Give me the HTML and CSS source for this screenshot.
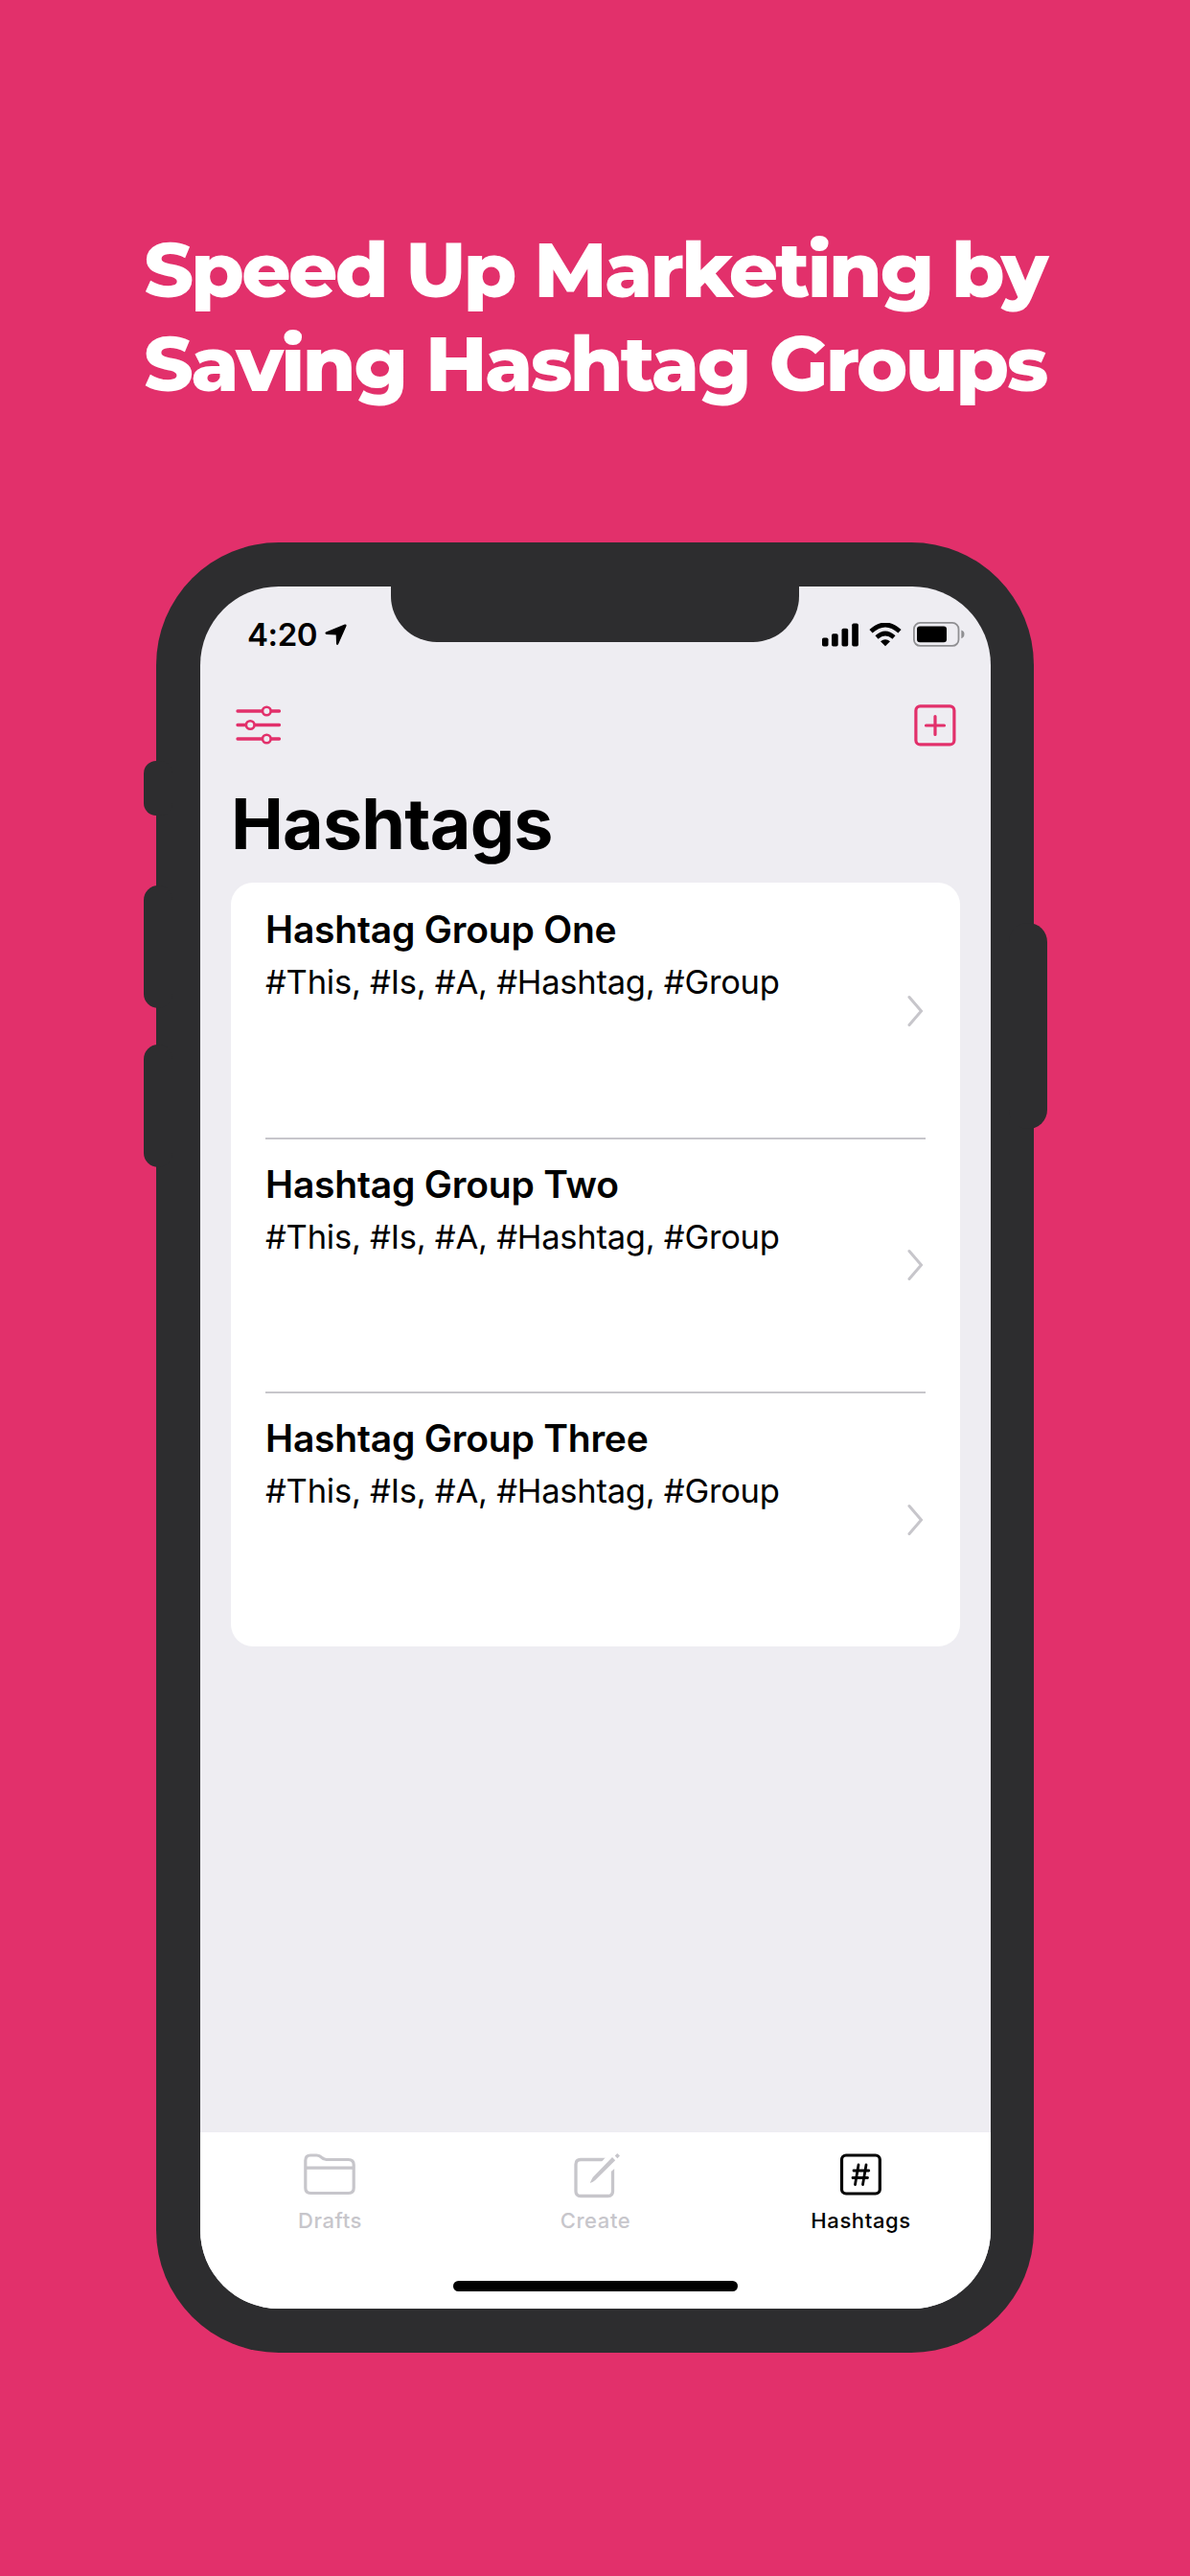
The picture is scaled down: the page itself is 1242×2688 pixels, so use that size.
FILE: index.html
```html
<!DOCTYPE html>
<html lang="en">
<head>
<meta charset="utf-8">
<title>Hashtags</title>
<link rel="stylesheet" href="styles.css">
</head>
<body>
<main class="poster">
  <h1 class="headline"><span class="line-one">Speed Up Marketing by</span><span class="line-two">Saving Hashtag Groups</span></h1>
  <div class="phone">
    <i class="key key-mute"></i><i class="key key-up"></i><i class="key key-down"></i><i class="key key-power"></i>
    <div class="screen">
      <div class="notch"></div>
      <div class="status">
        <span class="time">4:20</span>
        <svg class="location" width="23" height="23" viewBox="0 0 23 23"><path d="M20.800 .5Q22.900 .1 22.500 2.200L14.200 21Q13 23 12 21L11.700 11.500L1.500 10.900Q-.5 9.700 1.200 8.500Z"/></svg>
        <div class="indicators">
          <svg width="38" height="25" viewBox="0 0 38 25"><rect x="0" y="15.500" width="6.500" height="9" rx="1.800"/><rect x="10" y="11.200" width="6.700" height="13.300" rx="1.800"/><rect x="20.500" y="5.800" width="6.700" height="18.700" rx="1.800"/><rect x="31.200" y=".5" width="6.700" height="24" rx="1.800"/></svg>
          <svg width="34" height="25" viewBox="0 0 34 25"><path d="M2 8.800Q17-4.800 32 8.800" fill="none" stroke="#000" stroke-width="4.800"/><path d="M8 15Q17 7 26 15" fill="none" stroke="#000" stroke-width="4.600"/><path d="M12 19.200Q17 15.200 22 19.200L17 24.300Z"/></svg>
          <svg width="54" height="26" viewBox="0 0 54 26"><rect x=".9" y=".9" width="46.600" height="24" rx="6.500" fill="none" stroke="#8f8f92" stroke-width="1.800"/><rect x="4" y="4.500" width="31" height="16.800" rx="3"/><path d="M50.300 8.500Q53.500 9.500 53.500 12.800T50.300 17.200Z" fill="#8f8f92"/></svg>
        </div>
      </div>
      <div class="toolbar">
        <svg width="48" height="42" viewBox="0 0 48 42"><g fill="#eeedf2" stroke="#e2306b" stroke-width="3.300" stroke-linecap="round"><path d="M2 6H45.500M2 20.500H45.500M2 35H45.500"/><g stroke-width="2.600"><circle cx="32.300" cy="6" r="4.300"/><circle cx="15.200" cy="20.500" r="4.300"/><circle cx="32.300" cy="35" r="4.300"/></g></g></svg>
        <svg width="44" height="44" viewBox="0 0 44 44"><g fill="none" stroke="#e2306b" stroke-width="3.200" stroke-linecap="round"><rect x="1.900" y="1.900" width="40" height="40" rx="4.500"/><path d="M22 12.500V31.500M12.500 22H31.500"/></g></svg>
      </div>
      <h2 class="title">Hashtags</h2>
      <ul class="groups">
        <li class="group"><div><h3>Hashtag Group One</h3><p>#This, #Is, #A, #Hashtag, #Group</p></div><svg class="chevron" width="17" height="34" viewBox="0 0 17 34"><path d="M2 2.500L14.500 17L2 31.500"/></svg></li>
        <li class="group"><div><h3>Hashtag Group Two</h3><p>#This, #Is, #A, #Hashtag, #Group</p></div><svg class="chevron" width="17" height="34" viewBox="0 0 17 34"><path d="M2 2.500L14.500 17L2 31.500"/></svg></li>
        <li class="group"><div><h3>Hashtag Group Three</h3><p>#This, #Is, #A, #Hashtag, #Group</p></div><svg class="chevron" width="17" height="34" viewBox="0 0 17 34"><path d="M2 2.500L14.500 17L2 31.500"/></svg></li>
      </ul>
      <nav class="tabs">
        <div class="tab"><svg width="54" height="48" viewBox="0 0 54 48"><g fill="none" stroke="currentColor" stroke-width="3.200"><path d="M1.800 7.500Q1.800 2 7 2H13.500Q16.500 2 18.500 4.200Q20.700 6.500 23.500 6.500H46.500Q52.200 6.500 52.200 12V36Q52.200 41.500 46.500 41.500H7.500Q1.800 41.500 1.800 36ZM2 15.200H52"/></g></svg><span>Drafts</span></div>
        <div class="tab"><svg width="54" height="48" viewBox="0 0 54 48"><g fill="none" stroke="currentColor" stroke-width="3.300"><path d="M38 6.500H12Q7 6.500 7 11.500V39.500Q7 44.500 12 44.500H40.500Q45.500 44.500 45.500 39.500V15.500"/></g><path fill="#fff" d="M32 11L39 3L48 9L49 14.500L42 20.500Z"/><path fill="currentColor" d="M45 4L48.200 7.200L27.200 28Q25.200 29.800 21.700 31Q23.200 27.500 24.700 25ZM50.200 0L53 2.500L50.400 5.200L47.700 2.400Z"/></svg><span>Create</span></div>
        <div class="tab active"><svg width="54" height="48" viewBox="0 0 54 48"><g fill="none" stroke="currentColor" stroke-linecap="round"><rect x="7.500" y="2" width="39.800" height="40" rx="4.500" stroke-width="3.200"/><path stroke-width="2.800" d="M25 12L21.500 32.500M33 12L29.500 32.500M20 18H35.800M19 25.500H34.500"/></g></svg><span>Hashtags</span></div>
      </nav>
      <div class="home"></div>
    </div>
  </div>
</main>
</body>
</html>
```
FILE: styles.css
```css
* { box-sizing: border-box; margin: 0; padding: 0; }
body { background: #e2306b; font-family: Inter, "Liberation Sans", sans-serif; color: #000; }
svg { display: block; flex: none; }
.poster { width: 1242px; height: 2688px; padding-top: 233px; display: flex; flex-direction: column; align-items: center; overflow: hidden; }
.headline { color: #fff; font-family: Montserrat, Inter, sans-serif; font-size: 80px; font-weight: 800; line-height: 97.500px; white-space: nowrap; text-align: center; }
.headline span { display: block; }
.line-one { letter-spacing: -2.650px; }
.line-two { letter-spacing: -2.550px; }

.phone { position: relative; width: 916px; height: 1889px; margin-top: 137.500px; padding: 46px 45.500px; border-radius: 128px; background: #2d2d2f; }
.key { position: absolute; left: -13px; width: 30px; border-radius: 13px; background: #2d2d2f; }
.key-mute { top: 228px; height: 57px; }
.key-up { top: 358px; height: 128px; border-radius: 18px; }
.key-down { top: 524px; height: 128px; border-radius: 18px; }
.key-power { left: auto; right: -13.500px; top: 397px; height: 215px; width: 40px; border-radius: 20px; }

.screen { position: relative; height: 1797px; border-radius: 82px; background: #eeedf2; overflow: hidden; display: flex; flex-direction: column; }
.notch { position: absolute; top: -1px; left: 199px; width: 426px; height: 59px; border-radius: 0 0 48px 48px; background: #2d2d2f; }
.status { height: 101px; padding: 0 27px 0 49.500px; display: flex; align-items: center; }
.time { font-size: 33px; font-weight: 600; line-height: 40px; letter-spacing: -.4px; }
.location { margin-left: 8px; }
.indicators { margin-left: auto; display: flex; gap: 11.500px; align-items: center; }
.toolbar { height: 89px; padding: 0 36px 0 37px; display: flex; align-items: center; justify-content: space-between; }
.title { margin: 13px 0 0 32.500px; font-size: 73.500px; line-height: 90px; font-weight: 700; letter-spacing: -.8px; white-space: nowrap; }
.groups { list-style: none; margin: 16.500px 31.500px 0 32.500px; height: 796.500px; background: #fff; border-radius: 23px; }
.group { height: 265.500px; margin: 0 36px; border-top: 2px solid #c7c6cb; display: flex; justify-content: space-between; align-items: center; }
.group:first-child { border-top-color: transparent; }
.group > div { align-self: flex-start; padding-top: 24px; white-space: nowrap; }
.group h3 { font-size: 39px; line-height: 46px; font-weight: 600; letter-spacing: -.2px; }
.group p { font-size: 34.500px; line-height: 42px; margin-top: 11px; letter-spacing: -.24px; }
.chevron { margin-right: 2px; fill: none; stroke: #c7c6cb; stroke-width: 3; stroke-linecap: round; }
.tabs { margin-top: auto; height: 184px; background: #fff; display: grid; grid-template-columns: repeat(3, 277px); justify-content: center; flex: none; }
.tab { display: flex; flex-direction: column; align-items: center; padding-top: 22px; color: #c7c6cb; font-size: 22px; font-weight: 500; line-height: 28px; letter-spacing: .6px; }
.tab span { margin: 8px 0 0 1px; }
.tab.active { color: #000; }
.home { position: absolute; left: 264.500px; bottom: 18px; width: 297px; height: 11px; border-radius: 6px; background: #000; }
```
